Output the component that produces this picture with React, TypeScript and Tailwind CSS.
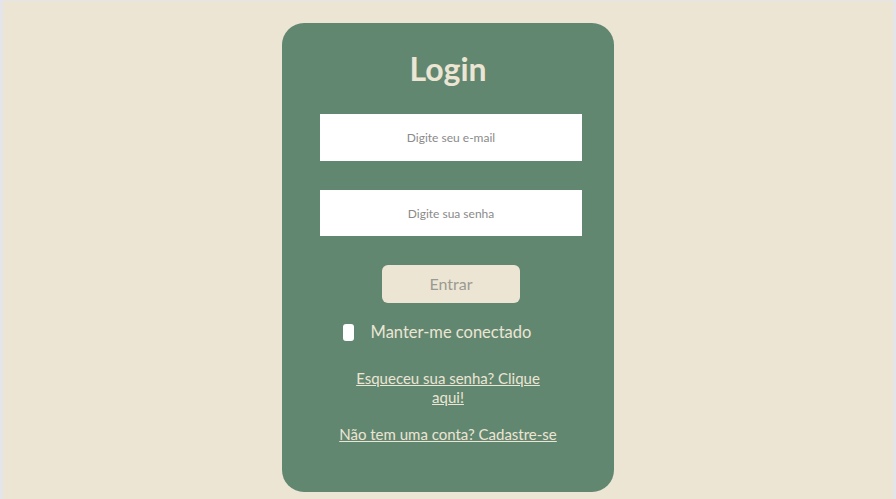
export default function App() {
  return (
    <div className="min-h-[499px] w-full bg-[#ECE5D4] border-x-[3px] border-t border-[#e3e5ea] flex justify-center" style={{ fontFamily: 'Lato, "Noto Sans", sans-serif' }}>
      <div className="mt-[22px] mb-[7px] w-[332px] h-[469px] rounded-[22px] bg-[#618770] flex flex-col items-center text-[#ECE5D4]">
        <h1 className="mt-[27px] text-[32px] leading-[38px] font-bold">Login</h1>
        <div className="mt-[26px] ml-[6px] flex flex-col gap-[29px]">
          <input
            type="email"
            placeholder="Digite seu e-mail"
            className="w-[262px] h-[47px] bg-white text-center text-[12px] text-[#555] placeholder:text-[#8a8a8a] outline-none"
          />
          <input
            type="password"
            placeholder="Digite sua senha"
            className="w-[262px] h-[46px] bg-white text-center text-[12px] text-[#555] placeholder:text-[#8a8a8a] outline-none"
          />
        </div>
        <button className="mt-[29px] ml-[6px] w-[138px] h-[38px] rounded-[6px] bg-[#ECE5D4] text-[#9b9a92] text-[16px]">
          Entrar
        </button>
        <label className="mt-[17px] -ml-[22px] flex items-center gap-[17px] text-[16.5px]">
          <span className="w-[11px] h-[17px] rounded-[3px] bg-white shrink-0" />
          Manter-me conectado
        </label>
        <a href="#" className="mt-[24px] w-[188px] text-center text-[15px] leading-[19px] underline">
          Esqueceu sua senha? Clique aqui!
        </a>
        <a href="#" className="mt-[18px] text-center text-[15px] leading-[19px] underline">
          Não tem uma conta? Cadastre-se
        </a>
      </div>
    </div>
  );
}
